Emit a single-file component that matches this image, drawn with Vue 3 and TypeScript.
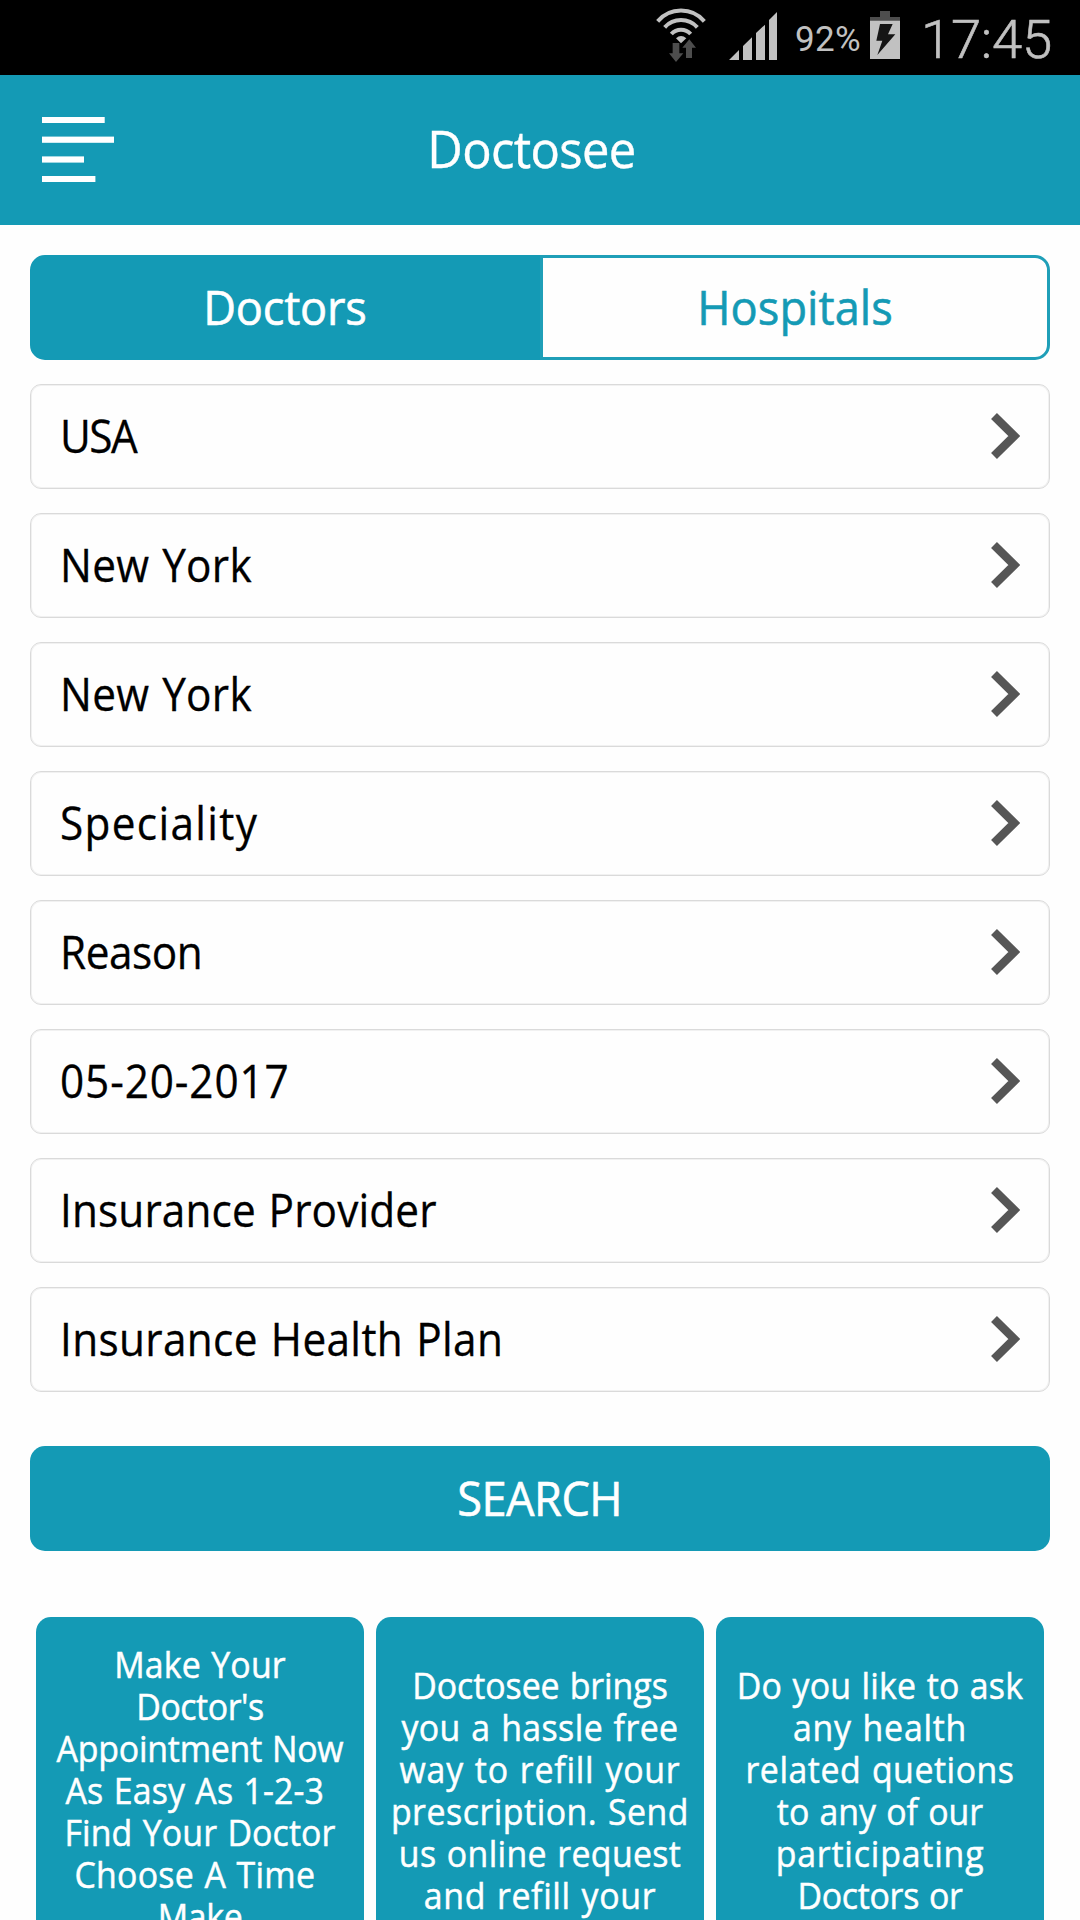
<script setup lang="ts">
import { ref } from 'vue'

interface Line {
  text: string
  spacing: number
}

const tab = ref<'doctors' | 'hospitals'>('doctors')

const fields: Line[] = [
  { text: 'USA', spacing: -1.6 },
  { text: 'New York', spacing: 0.3 },
  { text: 'New York', spacing: 0.3 },
  { text: 'Speciality', spacing: 1.42 },
  { text: 'Reason', spacing: -0.46 },
  { text: '05-20-2017', spacing: 0.95 },
  { text: 'Insurance Provider', spacing: 0.14 },
  { text: 'Insurance Health Plan', spacing: 0.38 },
]

const cards: { id: string; lines: Line[] }[] = [
  {
    id: 'appointment',
    lines: [
      { text: 'Make Your', spacing: 0.2 },
      { text: "Doctor's", spacing: -0.46 },
      { text: 'Appointment Now', spacing: -0.22 },
      { text: 'As Easy As 1-2-3 ', spacing: 0.17 },
      { text: 'Find Your Doctor', spacing: 0.14 },
      { text: 'Choose A Time ', spacing: 0.3 },
      { text: 'Make', spacing: -0.38 },
    ],
  },
  {
    id: 'refill',
    lines: [
      { text: 'Doctosee brings', spacing: -0.05 },
      { text: 'you a hassle free', spacing: 0.45 },
      { text: 'way to refill your', spacing: 0.85 },
      { text: 'prescription. Send', spacing: 0.56 },
      { text: 'us online request', spacing: 0.36 },
      { text: 'and refill your', spacing: 0.71 },
    ],
  },
  {
    id: 'questions',
    lines: [
      { text: 'Do you like to ask', spacing: 0.23 },
      { text: 'any health', spacing: 0.81 },
      { text: 'related quetions', spacing: 0.57 },
      { text: 'to any of our', spacing: 0.02 },
      { text: 'participating', spacing: 0.88 },
      { text: 'Doctors or', spacing: -0.28 },
    ],
  },
]
</script>

<template>
  <div class="screen">
    <div class="status">
      <svg class="wifi" viewBox="30 0 180 225" width="60" height="75">
        <g fill="none" stroke="#c1c1c1" stroke-width="12">
          <path d="M53 64A92 92 0 0 1 193 64" />
          <path d="M74 82A66 66 0 0 1 172 82" />
          <path d="M94 102A39 39 0 0 1 152 102" />
        </g>
        <path d="M108 115Q123 101 139 115L123 130Z" fill="#c1c1c1" />
        <path d="M98 129H118V160H130L108 186L87 160H98Z" fill="#4d4d4d" />
        <path d="M138 174V143H127L148 118L168 143H156V174Z" fill="#4d4d4d" />
      </svg>
      <svg class="signal" viewBox="255 0 165 225" width="55" height="75">
        <path
          d="M267 180L297 150V180ZM309 180V138L336 112V180ZM348 180V99L375 74V180ZM387 180V60L411 36V180Z"
          fill="#c1c1c1"
        />
      </svg>
      <span class="percent">92%</span>
      <svg class="battery" viewBox="684 0 102 225" width="34" height="75">
        <path d="M720 33H750V51H780V63H690V51H720Z" fill="#4d4d4d" />
        <path d="M690 62H780V177H690Z" fill="#c1c1c1" />
        <path d="M720 72H758L744 103H766L712 165L727 122H709Z" fill="#151515" />
      </svg>
      <span class="clock">17:45</span>
    </div>

    <header class="bar">
      <svg class="menu" viewBox="0 0 72 66" width="72" height="66" fill="#fff">
        <rect y="0" width="62.7" height="6" />
        <rect y="19.6" width="72" height="6.2" />
        <rect y="39.4" width="42" height="6.2" />
        <rect y="59" width="53.4" height="6" />
      </svg>
      <h1>Doctosee</h1>
    </header>

    <main>
      <div class="tabs">
        <button :class="['tab', 'first', { active: tab === 'doctors' }]" @click="tab = 'doctors'"><span>Doctors</span></button>
        <button :class="['tab', 'last', { active: tab === 'hospitals' }]" @click="tab = 'hospitals'"><span>Hospitals</span></button>
      </div>

      <div class="fields">
        <div v-for="(f, i) in fields" :key="i" class="field">
          <span :style="{ letterSpacing: f.spacing + 'px' }">{{ f.text }}</span>
          <svg viewBox="0 0 30 48" width="30" height="48">
            <path d="M4 4L24.3 24L4 44" fill="none" stroke="#565656" stroke-width="8.4" />
          </svg>
        </div>
      </div>

      <button class="search"><span>SEARCH</span></button>

      <div class="cards">
        <div v-for="c in cards" :key="c.id" :class="['card', c.id]">
          <div v-for="l in c.lines" :key="l.text" class="line" :style="{ letterSpacing: l.spacing + 'px' }">{{ l.text }}</div>
        </div>
      </div>
    </main>
  </div>
</template>

<style>
body {
  background: #fefefe;
}
</style>

<style scoped>
.screen {
  width: 1080px;
  height: 1920px;
  overflow: hidden;
  background: #fefefe;
  font-family: "Open Sans", "Noto Sans", sans-serif;
  color: #000;
}
.status {
  display: flex;
  height: 75px;
  box-sizing: border-box;
  padding-left: 650px;
  background: #000;
  color: #c1c1c1;
  font-family: Roboto, sans-serif;
}
.status svg,
.status span {
  flex: none;
}
.signal {
  margin-left: 15px;
}
.percent {
  width: 73px;
  margin-left: 15px;
  font-size: 35px;
  line-height: 79px;
  letter-spacing: 0.3px;
}
.clock {
  margin-left: 19px;
  font-size: 54.5px;
  font-weight: 300;
  line-height: 79px;
  letter-spacing: -0.3px;
  -webkit-text-stroke: 0.6px #c1c1c1;
}
.bar {
  display: flex;
  align-items: center;
  height: 150px;
  box-sizing: border-box;
  padding: 0 131px 0 42px;
  background: #149ab5;
}
.bar h1 {
  flex: 1;
  margin: 0 0 4px;
  color: #fff;
  font-size: 52px;
  font-weight: 400;
  line-height: 60px;
  letter-spacing: -0.65px;
  text-align: center;
  transform: scaleX(0.94);
  -webkit-text-stroke: 0.4px currentColor;
}
main {
  padding: 30px 30px 0;
}
button {
  display: block;
  margin: 0;
  border: 0;
  padding: 0 0 2px;
  font-family: inherit;
  font-size: 48px;
}
button span {
  display: inline-block;
  transform: scaleX(0.94);
  -webkit-text-stroke: 0.6px currentColor;
}
.tabs {
  display: flex;
  height: 105px;
}
.tab {
  width: 510px;
  box-sizing: border-box;
  border: 3px solid #1f9fb8;
  background: #fefefe;
  color: #149ab5;
}
.tab.first {
  border-radius: 15px 0 0 15px;
  letter-spacing: -0.2px;
}
.tab.last {
  border-radius: 0 15px 15px 0;
  letter-spacing: 0.08px;
}
.tab.active {
  border-color: #149ab5;
  background: #149ab5;
  color: #fff;
}
.fields {
  display: flex;
  flex-direction: column;
  gap: 24px;
  margin-top: 24px;
}
.field {
  display: flex;
  align-items: center;
  justify-content: space-between;
  height: 105px;
  box-sizing: border-box;
  border: 1px solid #dadada;
  border-radius: 11px;
  padding: 0 29px;
  box-shadow: inset 0 0 0 1px #f1f1f1;
  font-size: 45px;
}
.field span {
  padding-bottom: 2px;
  line-height: 60px;
  word-spacing: 0.04em;
  white-space: pre;
  transform: scaleX(0.94);
  transform-origin: left center;
  -webkit-text-stroke: 0.3px currentColor;
}
.field svg {
  margin-bottom: 1px;
}
.search {
  width: 100%;
  height: 105px;
  margin-top: 54px;
  border-radius: 15px;
  background: #149ab5;
  color: #fff;
  letter-spacing: -0.55px;
}
.cards {
  display: flex;
  gap: 12px;
  margin: 66px 6px 0;
}
.card {
  width: 328px;
  height: 360px;
  box-sizing: border-box;
  border-radius: 15px;
  padding-top: 48px;
  background: #149ab5;
  color: #fff;
  font-size: 36px;
  line-height: 42px;
  text-align: center;
  word-spacing: 0.04em;
}
.card.appointment {
  padding-top: 27px;
}
.line {
  white-space: pre;
  transform: scaleX(0.94);
  -webkit-text-stroke: 0.5px currentColor;
}
</style>
